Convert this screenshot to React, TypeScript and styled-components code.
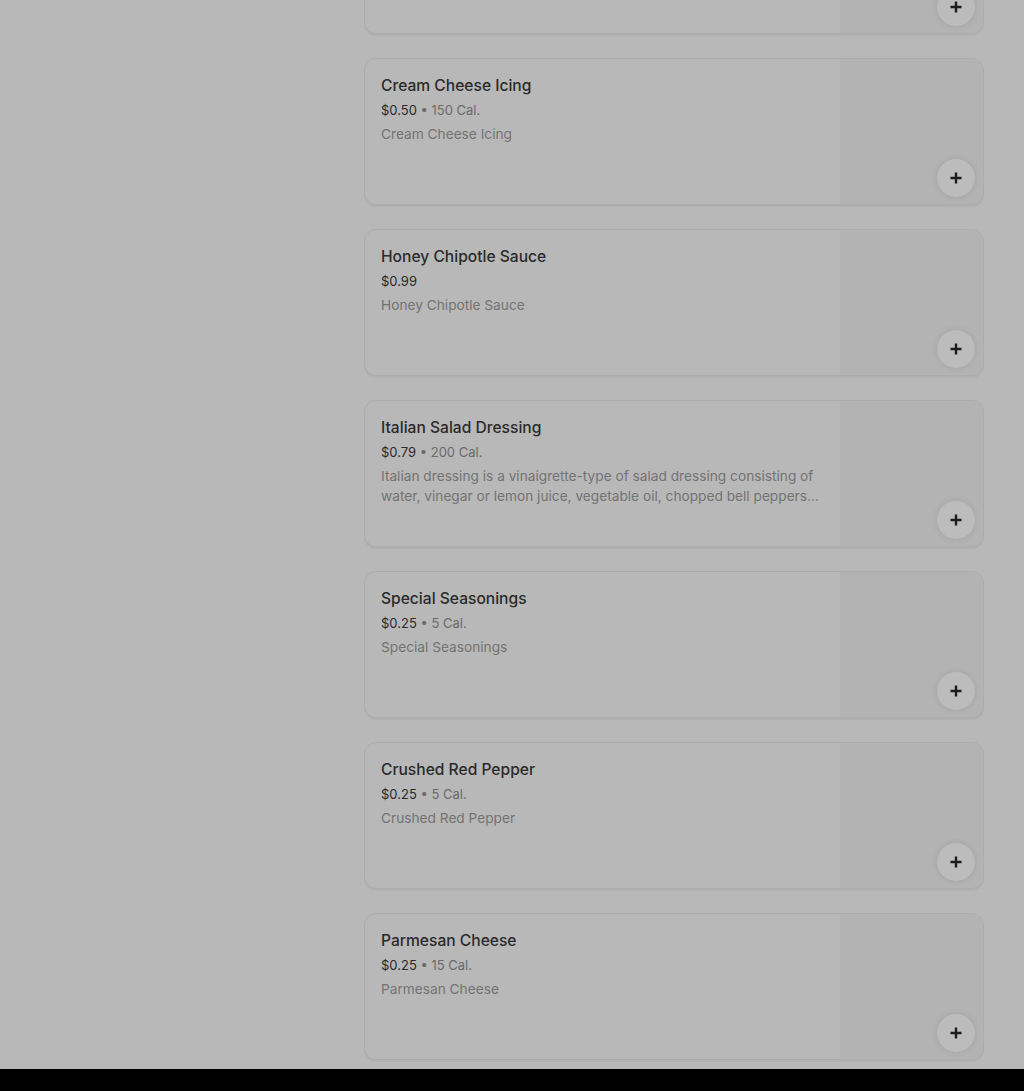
import styled, { createGlobalStyle } from "styled-components";

const GlobalStyle = createGlobalStyle`
  html, body {
    margin: 0;
    padding: 0;
    background: #b8b8b8;
    overflow: hidden;
  }
  body {
    font-family: Inter, "Noto Sans", Roboto, sans-serif;
    -webkit-font-smoothing: antialiased;
  }
`;

const Page = styled.div`
  height: 1091px;
  display: flex;
  flex-direction: column;
  overflow: hidden;
`;

const Body = styled.div`
  flex: 1;
  display: grid;
  grid-template-columns: 364px 620px;
  overflow: hidden;
`;

const Sidebar = styled.aside``;

const List = styled.div`
  display: flex;
  flex-direction: column;
  gap: 24px;
  margin-top: -113px;
  padding-bottom: 9px;
`;

const Card = styled.div`
  position: relative;
  height: 147px;
  box-sizing: border-box;
  border: 1px solid #acacac;
  border-radius: 12px;
  background: #b8b8b8;
  box-shadow: 0 2px 0 rgba(0, 0, 0, 0.04);
  display: grid;
  grid-template-columns: 1fr 143px;
  overflow: hidden;
`;

const Info = styled.div`
  padding: 17px 16px 0 16px;
  display: flex;
  flex-direction: column;
  min-width: 0;
`;

const Name = styled.div`
  font-size: 15.6px;
  line-height: 20px;
  font-weight: 500;
  color: #2a2a2a;
`;

const Meta = styled.div`
  margin-top: 4px;
  font-size: 13px;
  line-height: 20px;
  color: #6a6a6a;
`;

const Price = styled.span`
  color: #2a2a2a;
`;

const Desc = styled.div`
  margin-top: 4px;
  font-size: 13.7px;
  line-height: 20px;
  color: #737373;
  max-width: 440px;
  display: -webkit-box;
  -webkit-line-clamp: 2;
  -webkit-box-orient: vertical;
  overflow: hidden;
`;

const Thumb = styled.div`
  position: relative;
  background: #b3b3b3;
`;

const AddButton = styled.button`
  position: absolute;
  right: 8px;
  bottom: 7px;
  width: 38px;
  height: 38px;
  border-radius: 50%;
  border: none;
  padding: 0;
  background: #bcbcbc;
  box-shadow: 0 0 6px rgba(0, 0, 0, 0.1);
  display: flex;
  align-items: center;
  justify-content: center;
  cursor: pointer;
`;

const Footer = styled.div`
  height: 22px;
  background: #000;
  flex-shrink: 0;
`;

type Item = { name: string; price: string; cal?: string; desc: string };

const items: Item[] = [
  { name: "Ranch Dressing", price: "$0.50", cal: "110 Cal.", desc: "Ranch Dressing" },
  { name: "Cream Cheese Icing", price: "$0.50", cal: "150 Cal.", desc: "Cream Cheese Icing" },
  { name: "Honey Chipotle Sauce", price: "$0.99", desc: "Honey Chipotle Sauce" },
  {
    name: "Italian Salad Dressing",
    price: "$0.79",
    cal: "200 Cal.",
    desc: "Italian dressing is a vinaigrette-type of salad dressing consisting of water, vinegar or lemon juice, vegetable oil, chopped bell peppers, sugar or corn syrup, herbs and spices.",
  },
  { name: "Special Seasonings", price: "$0.25", cal: "5 Cal.", desc: "Special Seasonings" },
  { name: "Crushed Red Pepper", price: "$0.25", cal: "5 Cal.", desc: "Crushed Red Pepper" },
  { name: "Parmesan Cheese", price: "$0.25", cal: "15 Cal.", desc: "Parmesan Cheese" },
];

const Plus = () => (
  <svg width="14" height="14" viewBox="0 0 14 14" aria-hidden>
    <path d="M7 1.5v11M1.5 7h11" stroke="#1c1c1c" strokeWidth="2.4" fill="none" />
  </svg>
);

export default function App() {
  return (
    <>
      <GlobalStyle />
      <Page>
        <Body>
          <Sidebar />
          <List>
            {items.map((it) => (
              <Card key={it.name}>
                <Info>
                  <Name>{it.name}</Name>
                  <Meta>
                    <Price>{it.price}</Price>
                    {it.cal ? ` • ${it.cal}` : ""}
                  </Meta>
                  <Desc>{it.desc}</Desc>
                </Info>
                <Thumb>
                  <AddButton aria-label={`Add ${it.name}`}>
                    <Plus />
                  </AddButton>
                </Thumb>
              </Card>
            ))}
          </List>
        </Body>
        <Footer />
      </Page>
    </>
  );
}
